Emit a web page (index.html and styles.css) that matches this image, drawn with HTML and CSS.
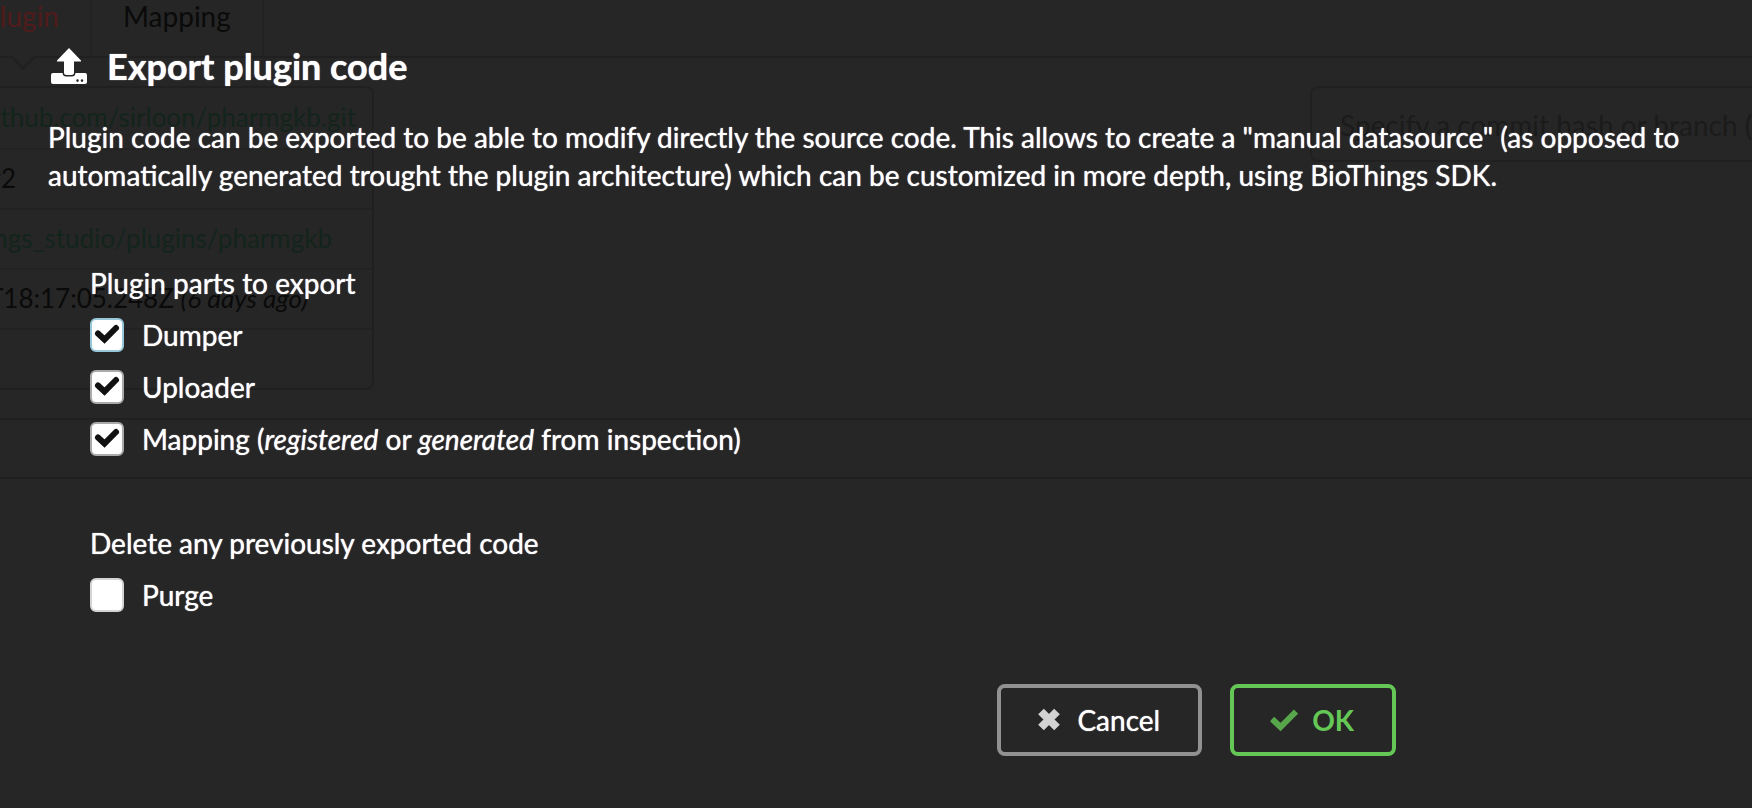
FILE: index.html
```html
<!DOCTYPE html>
<html lang="en">
<head>
<meta charset="utf-8">
<title>Export plugin code</title>
<link rel="stylesheet" href="styles.css">
</head>
<body>
<div class="page" aria-hidden="true">
  <nav class="tabs">
    <span class="tab tab-active">Plugin</span>
    <span class="tab">Mapping</span>
  </nav>
  <div class="pane">
    <table class="details">
      <tr><td><div class="value link">thub.com/sirloon/pharmgkb.git</div></td></tr>
      <tr><td><div class="value version">v2</div></td></tr>
      <tr><td><div class="value link path">ngs_studio/plugins/pharmgkb</div></td></tr>
      <tr><td><div class="value date">T18:17:05.248Z&nbsp;<em>(6 days ago)</em></div></td></tr>
      <tr><td></td></tr>
    </table>
    <div class="commit">Specify a commit hash or branch (</div>
  </div>
  <div class="footer-bar"></div>
</div>

<form class="modal" role="dialog" aria-labelledby="title">
  <h1 class="title" id="title">
    <svg class="title-icon" viewBox="0 0 36 36" aria-hidden="true">
      <path fill="currentColor" d="M18 0 30 12.500V13.500H23V24.500Q23 27 20.500 27H15.500Q13 27 13 24.500V13.500H6V12.500Z"/>
      <path fill="currentColor" fill-rule="evenodd" d="M2 25H11.500Q12 28.500 15 28.500H21Q24 28.500 24.500 25H34Q36 25 36 27V34Q36 36 34 36H2Q0 36 0 34V27Q0 25 2 25ZM26.500 31.300A1.300 1.300 0 1 0 26.500 33.900A1.300 1.300 0 1 0 26.500 31.300ZM31 31.300A1.300 1.300 0 1 0 31 33.900A1.300 1.300 0 1 0 31 31.300Z"/>
    </svg>
    Export plugin code
  </h1>
  <p class="intro">Plugin code can be exported to be able to modify directly the source code. This allows to create a "manual datasource" (as opposed to automatically generated trought the plugin architecture) which can be customized in more depth, using BioThings SDK.</p>
  <fieldset class="group">
    <legend class="legend">Plugin parts to export</legend>
    <label class="option"><input class="check check-focus" type="checkbox" checked>Dumper</label>
    <label class="option"><input class="check" type="checkbox" checked>Uploader</label>
    <label class="option"><input class="check" type="checkbox" checked><span>Mapping (<em>registered</em> or <em>generated</em> from inspection)</span></label>
  </fieldset>
  <fieldset class="group">
    <legend class="legend">Delete any previously exported code</legend>
    <label class="option"><input class="check" type="checkbox">Purge</label>
  </fieldset>
  <div class="actions">
    <button class="button cancel" type="button">
      <svg class="button-icon" viewBox="0 0 28 28" aria-hidden="true"><path d="M6 5.500 22 21.500M22 5.500 6 21.500"/></svg>Cancel
    </button>
    <button class="button ok" type="button">
      <svg class="button-icon" viewBox="0 0 28 28" aria-hidden="true"><path class="tick" d="M2 13 10.500 21 26 5.500"/></svg>OK
    </button>
  </div>
</form>
</body>
</html>
```
FILE: styles.css
```css
* { box-sizing: border-box; }

body {
  position: relative;
  min-height: 100vh;
  margin: 0;
  overflow: hidden;
  background: #262626;
  color: #fff;
  font: 400 28px/38px Lato, "Liberation Sans", sans-serif;
}

/* Dimmed page behind the dialog */
.page {
  position: absolute;
  inset: 0;
  overflow: hidden;
  color: #0a0a0a;
  white-space: nowrap;
}

.tabs {
  display: flex;
  height: 58px;
  border-bottom: 2px solid #202020;
}

.tab {
  display: flex;
  align-items: flex-start;
  width: 172px;
  padding: 0 31px;
  border-right: 2px solid #222;
  line-height: 32px;
}

.tab-active {
  position: relative;
  justify-content: flex-end;
  width: 92px;
  color: #511b1b;
}

.tab-active::after {
  content: "";
  position: absolute;
  top: 48px;
  left: 14px;
  width: 16px;
  height: 16px;
  border: solid #202020;
  border-width: 0 2px 2px 0;
  background: #262626;
  transform: rotate(45deg);
}

.pane {
  display: flex;
  justify-content: space-between;
  align-items: flex-start;
  height: 362px;
  padding-top: 28px;
  border-bottom: 2px solid #202020;
}

.details {
  width: 374px;
  border: 2px solid #202020;
  border-left: 0;
  border-radius: 0 8px 8px 0;
  border-spacing: 0;
  table-layout: fixed;
  font-size: 26px;
}

.details td {
  height: 60px;
  padding: 0 0 2px;
  border-bottom: 2px solid #222;
}

.details tr:first-child td { height: 62px; }

.details tr:last-child td {
  height: 58px;
  border-bottom: 0;
}

.value {
  display: flex;
  justify-content: flex-end;
  padding-right: 16px;
}

.link { color: #13241c; }
.path { padding-right: 40px; }
.version { padding-right: 356px; }
.date { padding-right: 64px; }

.commit {
  width: 442px;
  height: 76px;
  padding: 18px 28px;
  overflow: hidden;
  border: 2px solid #202020;
  border-right: 0;
  border-radius: 8px 0 0 8px;
  color: #1b1b1b;
}

.footer-bar {
  height: 59px;
  border-bottom: 2px solid #202020;
}

/* Dialog */
.modal {
  position: relative;
  padding: 41px 48px;
  text-shadow: 0 0 1px currentColor;
}

.title {
  display: flex;
  align-items: center;
  gap: 20px;
  margin: 0 0 27px;
  padding-left: 3px;
  font-size: 36px;
  font-weight: 700;
  line-height: 50px;
}

.title-icon {
  width: 36px;
  height: 36px;
}

.intro { margin: 0; }

.group {
  margin: 0 0 52px;
  padding: 0 42px;
  border: 0;
}

.intro + .group { margin-top: 70px; }

.legend {
  padding: 0;
  margin-bottom: 14px;
}

.option {
  display: flex;
  align-items: center;
  gap: 18px;
  width: fit-content;
  margin-bottom: 14px;
}

.check {
  width: 34px;
  height: 34px;
  margin: 0;
  appearance: none;
  border: 2px solid #d4d4d5;
  border-radius: 6px;
  background: #fff;
}

.check:checked {
  border-color: #aaa;
  background: #fff url('data:image/svg+xml,<svg xmlns="http://www.w3.org/2000/svg" viewBox="0 0 30 30"><path d="M6 13.500 12.500 19.500 24 8" fill="none" stroke="%23111" stroke-width="6" stroke-linecap="round"/></svg>') center / 30px;
}

.check.check-focus { border-color: #96c8da; }

.actions {
  display: flex;
  justify-content: flex-end;
  gap: 28px;
  padding-top: 4px;
  padding-right: 308px;
}

.button {
  display: flex;
  align-items: center;
  gap: 14px;
  height: 72px;
  padding: 0 38px 0 36px;
  border: 4px solid #919191;
  border-radius: 8px;
  background: transparent;
  color: #fff;
  font: inherit;
  text-shadow: inherit;
}

.cancel { padding-left: 34px; }

.button-icon {
  width: 28px;
  height: 28px;
  fill: none;
  stroke: currentColor;
  stroke-width: 8;
  opacity: 0.8;
}

.tick { stroke-width: 6; }

.ok {
  border-color: #65c755;
  color: #65c755;
  font-weight: 700;
  text-shadow: none;
}
```
